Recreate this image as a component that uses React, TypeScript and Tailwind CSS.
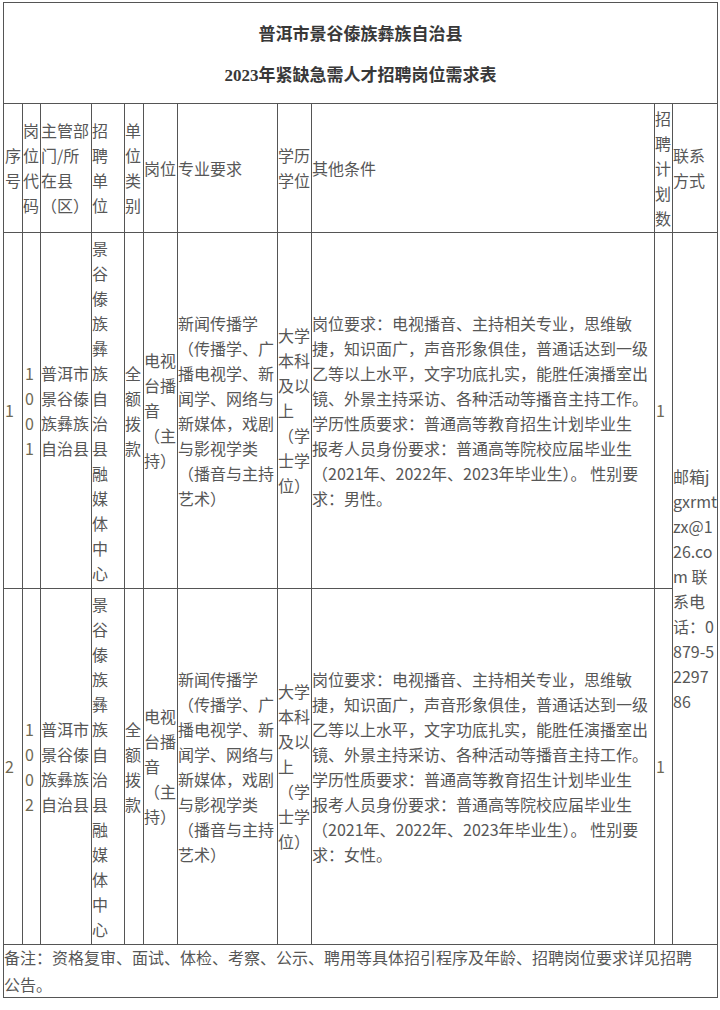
import React from "react";

type Row = {
    seq: string;
    code: string[];
    gender: string;
};

const rows: Row[] = [
    { seq: "1", code: ["1", "0", "0", "1"], gender: "求：男性。" },
    { seq: "2", code: ["1", "0", "0", "2"], gender: "求：女性。" },
];

const unitLines = ["景", "谷", "傣", "族", "彝", "族", "自", "治", "县", "融", "媒", "体", "中", "心"];
const deptLines = ["普洱市", "景谷傣", "族彝族", "自治县"];
const postLines = ["电视", "台播", "音", "（主", "持）"];
const majorLines = ["新闻传播学", "（传播学、广", "播电视学、新", "闻学、网络与", "新媒体，戏剧", "与影视学类", "（播音与主持", "艺术）"];
const eduLines = ["大学", "本科", "及以", "上", "（学", "士学", "位）"];
const otherLines = [
    "岗位要求：电视播音、主持相关专业，思维敏",
    "捷，知识面广，声音形象俱佳，普通话达到一级",
    "乙等以上水平，文字功底扎实，能胜任演播室出",
    "镜、外景主持采访、各种活动等播音主持工作。",
    "学历性质要求：普通高等教育招生计划毕业生",
    "报考人员身份要求：普通高等院校应届毕业生",
    "（2021年、2022年、2023年毕业生）。 性别要",
];
const contactLines = ["邮箱j", "gxrmt", "zx@1", "26.co", "m 联", "系电", "话：0", "879-5", "2297", "86"];

function Lines({ items }: { items: string[] }) {
    return (
        <>
            {items.map((l, i) => (
                <div key={i} className="whitespace-nowrap">{l}</div>
            ))}
        </>
    );
}

function Cell({ children, className = "" }: { children: React.ReactNode; className?: string }) {
    return <div className={`bg-white flex flex-col justify-center ${className}`}>{children}</div>;
}

export default function App() {
    return (
        <div className="min-h-[1010px] bg-white pl-[3px] pt-[2px] font-['Noto_Sans_CJK_SC',sans-serif] text-[16px] leading-[25px] text-[#575757]">
            <div className="grid w-fit grid-cols-[18px_17px_50px_32px_18px_33px_99px_33px_342px_17px_44px] grid-rows-[100px_128px_355px_355px_52px] gap-px border border-[#555] bg-[#555]">

                {/* title */}
                <Cell className="col-span-full items-center gap-[18px] pt-[2px] font-bold text-[17px] text-[#383838]">
                    <div>普洱市景谷傣族彝族自治县</div>
                    <div className="font-['Liberation_Serif','Noto_Sans_CJK_SC',serif]">2023年紧缺急需人才招聘岗位需求表</div>
                </Cell>

                {/* header */}
                <Cell className="pl-px"><Lines items={["序", "号"]} /></Cell>
                <Cell><Lines items={["岗", "位", "代", "码"]} /></Cell>
                <Cell><Lines items={["主管部", "门/所", "在县", "（区）"]} /></Cell>
                <Cell><Lines items={["招", "聘", "单", "位"]} /></Cell>
                <Cell><Lines items={["单", "位", "类", "别"]} /></Cell>
                <Cell><Lines items={["岗位"]} /></Cell>
                <Cell><Lines items={["专业要求"]} /></Cell>
                <Cell><Lines items={["学历", "学位"]} /></Cell>
                <Cell><Lines items={["其他条件"]} /></Cell>
                <Cell><Lines items={["招", "聘", "计", "划", "数"]} /></Cell>
                <Cell><Lines items={["联系", "方式"]} /></Cell>

                {rows.map((r, idx) => (
                    <React.Fragment key={r.seq}>
                        <Cell className="pl-px text-[#6f6a54]"><Lines items={[r.seq]} /></Cell>
                        <Cell className="pl-[2px] text-[#6f6a54]"><Lines items={r.code} /></Cell>
                        <Cell><Lines items={deptLines} /></Cell>
                        <Cell><Lines items={unitLines} /></Cell>
                        <Cell><Lines items={["全", "额", "拨", "款"]} /></Cell>
                        <Cell><Lines items={postLines} /></Cell>
                        <Cell><Lines items={majorLines} /></Cell>
                        <Cell><Lines items={eduLines} /></Cell>
                        <Cell><Lines items={[...otherLines, r.gender]} /></Cell>
                        <Cell className="pl-px text-[#6f6a54]"><Lines items={["1"]} /></Cell>
                        {idx === 0 && (
                            <Cell className="row-span-2"><Lines items={contactLines} /></Cell>
                        )}
                    </React.Fragment>
                ))}

                {/* note */}
                <Cell className="col-span-full leading-[27px]">
                    <Lines items={["备注：资格复审、面试、体检、考察、公示、聘用等具体招引程序及年龄、招聘岗位要求详见招聘", "公告。"]} />
                </Cell>
            </div>
        </div>
    );
}
